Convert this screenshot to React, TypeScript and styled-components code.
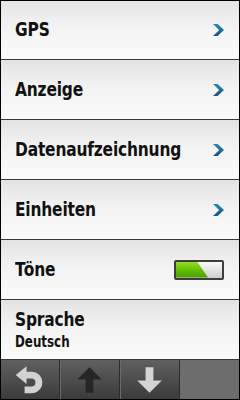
import styled, { createGlobalStyle } from "styled-components";

const Global = createGlobalStyle`
  html, body {
    margin: 0;
    padding: 0;
    background: #000;
  }
  body {
    font-family: "DejaVu Sans Condensed", "DejaVu Sans", sans-serif;
  }
`;

const Screen = styled.div`
  position: relative;
  width: 240px;
  height: 400px;
  display: flex;
  flex-direction: column;
  overflow: hidden;
  background: #fafafa;

  &::after {
    content: "";
    position: absolute;
    inset: 0;
    border: 1px solid #000;
    pointer-events: none;
  }
`;

const Row = styled.div`
  box-sizing: border-box;
  height: 60px;
  flex: none;
  display: flex;
  align-items: center;
  padding: 0 16px 0 15px;
  border-bottom: 1px solid #3a3a3a;
  background: linear-gradient(#e3e3e3 0%, #f3f3f3 45%, #fbfbfb 100%);
`;

const Label = styled.div`
  flex: 1;
  min-width: 0;
  display: flex;
  flex-direction: column;
  align-items: flex-start;
  gap: 3px;
`;

const Title = styled.span`
  display: inline-block;
  font-size: 19.5px;
  font-weight: bold;
  color: #111;
  line-height: 22px;
  letter-spacing: -0.2px;
  white-space: nowrap;
  transform: scaleX(0.88);
  transform-origin: left center;
`;

const Sub = styled(Title)`
  font-size: 15px;
  line-height: 16px;
  letter-spacing: 0;
`;

const Toggle = styled.div`
  flex: none;
  box-sizing: border-box;
  width: 50px;
  height: 20px;
  border: 2px solid #3e3e3e;
  border-radius: 2px;
  background: linear-gradient(#fafafa, #cfcfcf);
  position: relative;
  overflow: hidden;
`;

const ToggleFill = styled.div<{ $on: boolean }>`
  position: absolute;
  inset: 0;
  background: linear-gradient(#92e024, #5cb800 60%, #4aa000);
  clip-path: ${(p) =>
    p.$on ? "polygon(0 0, 21px 0, 32px 100%, 0 100%)" : "polygon(0 0, 0 0, 0 100%, 0 100%)"};
`;

const Bar = styled.div`
  flex: 1;
  display: grid;
  grid-template-columns: repeat(4, 60px);
  background: #6c6c6c;
`;

const BarButton = styled.button<{ $empty?: boolean }>`
  box-sizing: border-box;
  border: none;
  margin: 0;
  padding: 0;
  display: flex;
  align-items: center;
  justify-content: center;
  border-right: 1px solid ${(p) => (p.$empty ? "transparent" : "#2c2c2c")};
  box-shadow: ${(p) => (p.$empty ? "none" : "inset 1px 0 0 #6a6a6a")};
  background: ${(p) => (p.$empty ? "#6d6d6d" : "linear-gradient(#606060, #3a3a3a)")};
`;

const Chevron = () => (
  <svg width="11" height="12" viewBox="0 0 11 12" style={{ flex: "none" }}>
    <defs>
      <linearGradient id="chev" x1="0" y1="0" x2="0" y2="1">
        <stop offset="0" stopColor="#2a86bd" />
        <stop offset="1" stopColor="#14577f" />
      </linearGradient>
    </defs>
    <polygon points="0,0 4.6,0 11,6 4.6,12 0,12 6.2,6" fill="url(#chev)" />
  </svg>
);

const BackIcon = () => (
  <svg width="60" height="40" viewBox="0 0 60 40">
    <polygon points="16,15 27,6 27,24" fill="#d2d2d2" />
    <path d="M25 15 H32 A7.5 7.5 0 0 1 32 30 H25" fill="none" stroke="#d2d2d2" strokeWidth="7" />
  </svg>
);

const ArrowIcon = ({ down, color }: { down?: boolean; color: string }) => (
  <svg width="60" height="40" viewBox="0 0 60 40">
    <g transform={down ? "rotate(180 30 20)" : undefined}>
      <polygon points="30,7 42.5,19.5 34,19.5 34,33 26,33 26,19.5 17.5,19.5" fill={color} />
    </g>
  </svg>
);

const items = [
  { title: "GPS", kind: "link" },
  { title: "Anzeige", kind: "link" },
  { title: "Datenaufzeichnung", kind: "link" },
  { title: "Einheiten", kind: "link" },
  { title: "Töne", kind: "toggle" },
  { title: "Sprache", kind: "value", value: "Deutsch" },
];

export default function App() {
  return (
    <>
      <Global />
      <Screen>
        {items.map((it) => (
          <Row key={it.title}>
            <Label>
              <Title>{it.title}</Title>
              {it.value && <Sub>{it.value}</Sub>}
            </Label>
            {it.kind === "link" && <Chevron />}
            {it.kind === "toggle" && (
              <Toggle>
                <ToggleFill $on />
              </Toggle>
            )}
          </Row>
        ))}
        <Bar>
          <BarButton>
            <BackIcon />
          </BarButton>
          <BarButton>
            <ArrowIcon color="#262626" />
          </BarButton>
          <BarButton>
            <ArrowIcon down color="#d4d4d4" />
          </BarButton>
          <BarButton $empty />
        </Bar>
      </Screen>
    </>
  );
}
